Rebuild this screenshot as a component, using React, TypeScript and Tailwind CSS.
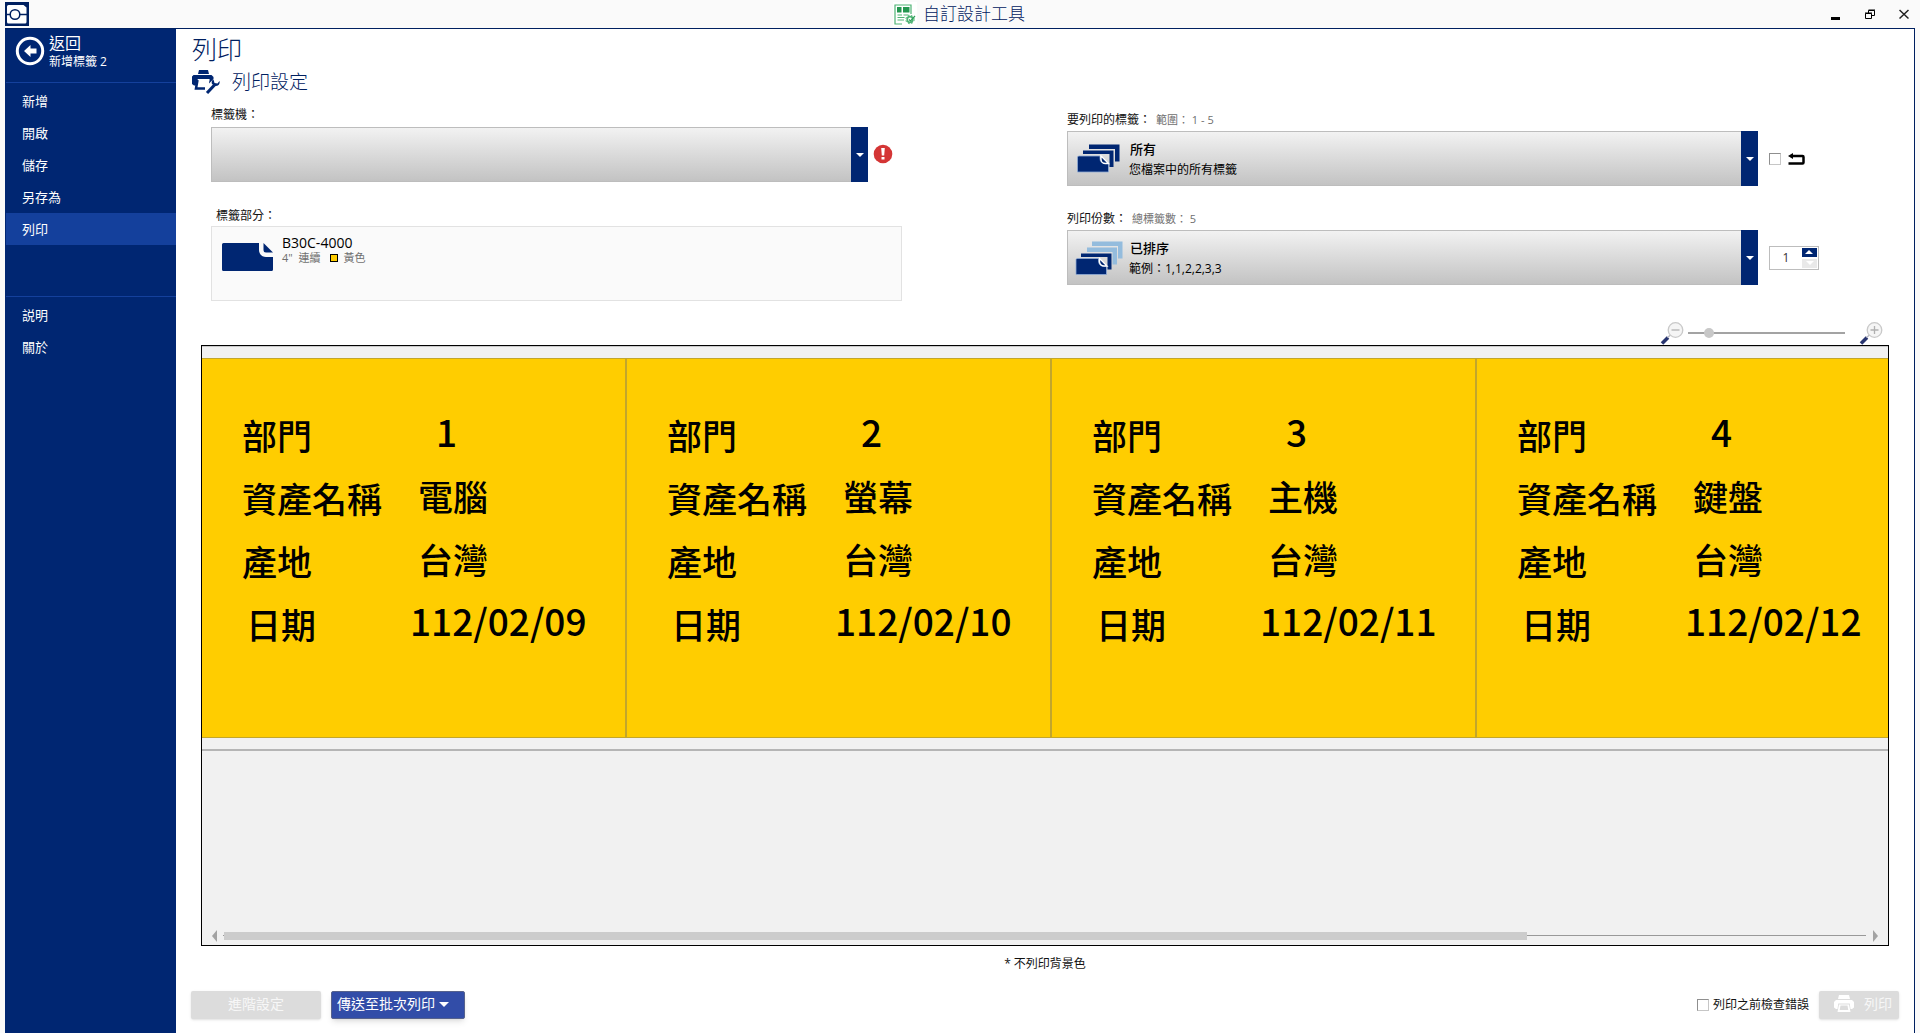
import React, { useState } from 'react';

interface AssetLabel {
    dept: string;
    name: string;
    origin: string;
    date: string;
}

const LABELS: AssetLabel[] = [
    { dept: '1', name: '電腦', origin: '台灣', date: '112/02/09' },
    { dept: '2', name: '螢幕', origin: '台灣', date: '112/02/10' },
    { dept: '3', name: '主機', origin: '台灣', date: '112/02/11' },
    { dept: '4', name: '鍵盤', origin: '台灣', date: '112/02/12' },
];

const FILE_MENU = ['新增', '開啟', '儲存', '另存為', '列印'];
const HELP_MENU = ['説明', '關於'];

const LogoIcon = () => (
    <svg className="h-6 w-6" viewBox="0 0 24 24">
        <rect width="24" height="24" fill="#002060" />
        <path d="M3.500 3h15l3 2.500v14.500a1.500 1.500 0 0 1-1.500 1.500H3.500A1.500 1.500 0 0 1 2 20V4.500A1.500 1.500 0 0 1 3.500 3z" fill="#fff" />
        <path d="M2 12.500h20" stroke="#002060" strokeWidth="1.500" />
        <circle cx="10" cy="12.500" r="4.800" fill="#fff" stroke="#002060" strokeWidth="1.500" />
    </svg>
);

const DesignerIcon = () => (
    <svg className="h-6 w-6" viewBox="0 0 24 24" fill="none">
        <rect width="24" height="24" fill="#fff" />
        <path d="M9 22H2V3h16v9" stroke="#4fb375" strokeWidth="1.200" />
        <rect x="4" y="5" width="4.500" height="5.500" fill="#23964f" />
        <rect x="10" y="5" width="6.500" height="5.500" fill="#23964f" />
        <path d="M4.500 13h4.500M10.500 13h5M4.500 15.500h7M4.500 18h6.500" stroke="#4fb375" strokeWidth="1.200" />
        <circle cx="17" cy="17.500" r="2.800" stroke="#4fb375" strokeWidth="1.700" />
        <circle cx="17" cy="17.500" r="4.200" stroke="#4fb375" strokeWidth="1" strokeDasharray="1.700 1.700" />
        <path d="M16 17.500l1.500 1.500 4.500-5" stroke="#2fa05a" strokeWidth="1.200" />
    </svg>
);

const BackIcon = () => (
    <svg className="h-[30px] w-[30px] shrink-0" viewBox="0 0 30 30">
        <circle cx="15" cy="15" r="12.700" fill="none" stroke="#fff" strokeWidth="3" />
        <path d="M9 15l6.500-6v3.500h6v5h-6V21z" fill="#fff" />
    </svg>
);

const PrinterToolIcon = () => (
    <svg className="h-6 w-7" viewBox="0 0 28 24">
        <path d="M7 0h9l1 4H6z" fill="#002672" />
        <path d="M1.500 5h18l2 2v2l-5 5 1-5H6l-.5 6.500H2L0 14V6.500z" fill="#002672" />
        <path d="M5.500 9.500h12l-.5 4-3 5.500H4z" fill="#fff" />
        <path d="M5.500 10L4 18.500h9" fill="none" stroke="#002672" strokeWidth="2.500" />
        <path d="M15 23l7.500-8" fill="none" stroke="#002672" strokeWidth="3" />
        <path d="M21.500 9.500l1 3.500 3 .5 2-2.500c.8 3-1.500 5.500-4.500 5l-3-2c-.8-2 0-4 1.500-4.500z" fill="#002672" />
    </svg>
);

const PrinterIcon = () => (
    <svg className="h-[18px] w-5" viewBox="0 0 20 18" fill="#fff">
        <path d="M5 0h10l1 4H4z" />
        <path d="M2 5h16l2 2v5.500L18 14h-1.500l-.8-5.500H4.300L3.500 14H2l-2-1.500V7z" />
        <path d="M5 9.500h10l1.500 7.500h-13zM6.500 10.500l-.8 4.500h8.600l-.8-4.500z" fillRule="evenodd" />
    </svg>
);

const MediaIcon = () => (
    <svg className="h-7 w-[51px] shrink-0" viewBox="0 0 51 28" fill="#002672">
        <path d="M1.500 0H37v7c0 4 3 7 7 7h7v12.500a1.500 1.500 0 0 1-1.500 1.500h-48A1.500 1.500 0 0 1 0 26.500v-25A1.500 1.500 0 0 1 1.500 0z" />
        <path d="M41.500 0l9.500 9.500h-7A2.500 2.500 0 0 1 41.500 7z" />
    </svg>
);

interface StackIconProps {
    sorted?: boolean;
}

const StackIcon: React.FC<StackIconProps> = ({ sorted = false }) => {
    if (sorted) {
        return (
            <svg className="h-[34px] w-12" viewBox="0 0 48 34">
                <path d="M17 .5h30.500v17H43V5H17z" fill="#94bcdd" />
                <path d="M12 6.500h30v17H37.500V11H12z" fill="#94bcdd" />
                <path d="M6 12.500h30.500v16H32.500V16H6z" fill="#002672" />
                <path d="M2 17.500h21.500V20c0 3 2 5 5 5H31.500v8.500H1V18.500z" fill="#002672" stroke="#8fabd6" strokeWidth=".8" />
                <path d="M24.500 17.500l7.500 7.500h-3a4.500 4.500 0 0 1-4.500-4.500z" fill="#002672" stroke="#fff" strokeWidth="1.300" />
            </svg>
        );
    }
    return (
        <svg className="h-[34px] w-12" viewBox="0 -2 48 34">
            <path d="M14 .5h30.500v17H40V5H14z" fill="#002672" />
            <path d="M8 6.500h30.500v16.500H34.500V10H8z" fill="#002672" />
            <path d="M3.500 12h21.500v2.500c0 3 2 5 5 5H33.500V28H2.500V13z" fill="#002672" stroke="#8fabd6" strokeWidth=".8" />
            <path d="M26 12l7.500 7.500h-3A4.500 4.500 0 0 1 26 15z" fill="#002672" stroke="#fff" strokeWidth="1.300" />
        </svg>
    );
};

const MagnifierIcon = ({ plus = false }: { plus?: boolean }) => (
    <svg className="h-6 w-6" viewBox="0 0 24 24" fill="none">
        <path d="M2 22.500l6-6" stroke="#28356f" strokeWidth="3.500" />
        <path d="M7.500 16.500l3-2.500" stroke="#b9b9c4" strokeWidth="1.500" />
        <circle cx="15.500" cy="9" r="7.300" fill="#f5f5f5" stroke="#c9c9c9" strokeWidth="1.300" />
        <path d={plus ? 'M11.500 9h8M15.500 5v8' : 'M11.500 9h8'} stroke="#b0b0b0" strokeWidth="1.300" />
    </svg>
);

const Caret = () => (
    <svg className="h-1 w-2" viewBox="0 0 8 4" fill="#fff">
        <path d="M0 0h8L4 4z" />
    </svg>
);

interface GradientSelectProps {
    id: string;
    title: string;
    description?: string;
    icon?: React.ReactNode;
}

const GradientSelect: React.FC<GradientSelectProps> = ({ id, title, description, icon }) => (
    <div className="relative h-[55px] min-w-0 flex-1">
        <select
            id={id}
            className="h-full w-full appearance-none border border-[#bdbdbd] bg-linear-to-b from-[#f2f2f2] to-[#c3c3c3] pb-[18px] pl-[62px] text-[13px] font-medium text-black"
        >
            <option>{title}</option>
        </select>
        {/* icon, second line and arrow lie over the native select */}
        <div className="pointer-events-none absolute inset-0 flex">
            <div className="flex w-[62px] shrink-0 items-center pl-2">{icon}</div>
            <div className="flex-1 pt-[29px] text-xs leading-5 text-black">{description}</div>
            <div className="flex w-[17px] items-center justify-center bg-[#002672]">
                <Caret />
            </div>
        </div>
    </div>
);

const CheckBox = ({ id, label }: { id: string; label?: string }) => (
    <input
        id={id}
        type="checkbox"
        aria-label={label}
        className="h-3 w-3 appearance-none border border-[#c6c6c6] border-t-[#8f8f8f] border-l-[#8f8f8f] bg-white checked:bg-[#002672]"
    />
);

const TitleBar = () => (
    <header className="grid h-7 grid-cols-[1fr_auto_1fr] items-center pr-[11px] pl-[5px]">
        <LogoIcon />
        <div className="flex items-center gap-1.5 pl-1">
            <DesignerIcon />
            <span className="text-[17px] leading-6 font-light text-[#002060]">自訂設計工具</span>
        </div>
        <div className="flex justify-end gap-6">
            <button type="button" aria-label="最小化" className="h-[11px] w-[10px]">
                <svg className="h-[11px] w-[10px]" viewBox="0 0 10 11">
                    <path d="M0 8h9v3H0z" />
                </svg>
            </button>
            <button type="button" aria-label="還原" className="h-[11px] w-[10px]">
                <svg className="h-[11px] w-[10px]" viewBox="0 0 10 11" fill="none" stroke="#000">
                    <path d="M3.500 4V1.500h6v5H7M3.500 1h6.500M.5 4.500h6v5h-6zM0 4h7" />
                </svg>
            </button>
            <button type="button" aria-label="關閉" className="h-[11px] w-[10px]">
                <svg className="h-[11px] w-[10px]" viewBox="0 0 10 11" fill="none" stroke="#222" strokeWidth="1.500">
                    <path d="M.5 1l9 8.500M9.500 1l-9 8.500" />
                </svg>
            </button>
        </div>
    </header>
);

const NavItem = ({ text, active }: { text: string; active?: boolean }) => (
    <li>
        <a href="#" className={`block h-8 pl-4 text-[13px] leading-8 ${active ? 'bg-[#14409c]' : ''}`}>
            {text}
        </a>
    </li>
);

const Sidebar = () => (
    <nav className="w-[171px] shrink-0 bg-[#002672] pl-px text-white">
        <a href="#" className="flex h-[54px] items-start border-b border-[#14409c] pt-[7px] pl-[9px]">
            <BackIcon />
            <span className="flex flex-col pl-1">
                <span className="-mt-1 text-base leading-[22px]">返回</span>
                <span className="text-xs leading-4">新增標籤 2</span>
            </span>
        </a>
        <ul className="pt-0.5">
            {FILE_MENU.map((item) => (
                <NavItem key={item} text={item} active={item === '列印'} />
            ))}
        </ul>
        <ul className="mt-[51px] border-t border-[#14409c] pt-0.5">
            {HELP_MENU.map((item) => (
                <NavItem key={item} text={item} />
            ))}
        </ul>
    </nav>
);

const PrintSettings = () => {
    const [copies, setCopies] = useState(1);

    return (
        <section className="flex">
            <div className="min-w-0 flex-1 pt-2">
                <label htmlFor="printer" className="mb-0.5 block text-xs leading-5">標籤機：</label>
                <div className="flex items-center">
                    <GradientSelect id="printer" title="" />
                    <svg className="mr-[9px] mb-0.5 ml-[5px] h-5 w-5" viewBox="0 0 20 20">
                        <circle cx="10" cy="10" r="9.300" fill="#d43535" />
                        <path d="M8.200 4h3.600l-.6 7.500H8.800zM8.500 13h3v2.500h-3z" fill="#fff" />
                    </svg>
                </div>
                <h3 className="mt-6 pl-[5px] text-xs leading-5">標籤部分：</h3>
                <div className="flex h-[75px] items-start border border-[#e2e2e2] bg-[#fafafa] pt-2 pl-[10px]">
                    <div className="pt-2">
                        <MediaIcon />
                    </div>
                    <div className="pl-[9px]">
                        <p className="text-sm leading-4 text-black">B30C-4000</p>
                        <p className="flex items-center text-[11px] leading-[14px] text-[#6f6f6f]">
                            <span>4"&nbsp; 連續</span>
                            <span className="mr-[5px] ml-[10px] h-2 w-2 border border-black bg-[#ffcd00]" />
                            <span>黃色</span>
                        </p>
                    </div>
                </div>
            </div>

            <div className="ml-[165px] min-w-0 flex-1 pt-[13px]">
                <div className="mb-px flex text-xs leading-5">
                    <label htmlFor="which">要列印的標籤：</label>
                    <span className="pl-[5px] text-[11px] text-[#6f6f6f]">範圍： 1 - 5</span>
                </div>
                <div className="flex">
                    <GradientSelect id="which" title="所有" description="您檔案中的所有標籤" icon={<StackIcon />} />
                </div>
                <div className="mt-[23px] mb-px flex text-xs leading-5">
                    <label htmlFor="copies-mode">列印份數：</label>
                    <span className="pl-[5px] text-[11px] text-[#6f6f6f]">總標籤數： 5</span>
                </div>
                <div className="flex">
                    <GradientSelect id="copies-mode" title="已排序" description="範例：1,1,2,2,3,3" icon={<StackIcon sorted />} />
                </div>
            </div>

            <div className="w-[156px] shrink-0 pt-[34px] pl-[11px]">
                <div className="flex h-[55px] items-center gap-[7px]">
                    <CheckBox id="reverse" label="反向列印" />
                    <svg className="h-3 w-[17px]" viewBox="0 0 17 12" fill="none" stroke="#000" strokeWidth="2.500">
                        <path d="M4 3h10.500q1 0 1 1v5.500q0 1-1 1H.5" />
                        <path d="M5 0v6L0 3z" fill="#000" stroke="none" />
                    </svg>
                </div>
                <div className="mt-11 flex h-[55px] items-center">
                    <div className="flex h-6 w-[50px] items-center border border-[#bdbdbd] bg-white pr-px">
                        <input
                            type="text"
                            aria-label="份數"
                            className="h-5 w-8 min-w-0 text-center text-xs text-[#333]"
                            value={copies}
                            onChange={(e) => setCopies(Number(e.target.value) || 1)}
                        />
                        <div className="flex flex-col gap-0.5">
                            <button
                                type="button"
                                aria-label="增加"
                                className="flex h-[9px] w-[15px] rotate-180 items-center justify-center bg-[#002672]"
                                onClick={() => setCopies(copies + 1)}
                            >
                                <Caret />
                            </button>
                            <button
                                type="button"
                                aria-label="減少"
                                className="flex h-[9px] w-[15px] items-center justify-center bg-[#e9e9e9]"
                                disabled={copies <= 1}
                                onClick={() => setCopies(copies - 1)}
                            >
                                <Caret />
                            </button>
                        </div>
                    </div>
                </div>
            </div>
        </section>
    );
};

const ZoomControl = () => (
    <div className="mt-[19px] mr-[31px] flex h-[25px] items-center justify-end">
        <button type="button" aria-label="縮小">
            <MagnifierIcon />
        </button>
        <input
            type="range"
            aria-label="縮放"
            defaultValue={11}
            className="mr-[14px] ml-[4px] h-3 w-[157px] appearance-none bg-transparent [&::-webkit-slider-runnable-track]:h-0.5 [&::-webkit-slider-runnable-track]:bg-[#a3a3a3] [&::-webkit-slider-thumb]:-mt-1 [&::-webkit-slider-thumb]:h-2.5 [&::-webkit-slider-thumb]:w-2.5 [&::-webkit-slider-thumb]:appearance-none [&::-webkit-slider-thumb]:rounded-full [&::-webkit-slider-thumb]:bg-[#c8c8c8]"
        />
        <button type="button" aria-label="放大">
            <MagnifierIcon plus />
        </button>
    </div>
);

const LabelCard = ({ label }: { label: AssetLabel }) => (
    <dl className="grid w-[425px] shrink-0 auto-rows-[63px] grid-cols-[168px_1fr] border-r-2 border-[#c2a62c] pt-[45px] pl-10 text-[35px] font-medium whitespace-nowrap text-black">
        <dt className="leading-[62px]">部門</dt>
        <dd className="pl-[26px] text-[37px] leading-[54px]">{label.dept}</dd>
        <dt className="leading-[62px]">資產名稱</dt>
        <dd className="pl-2 leading-[58px]">{label.name}</dd>
        <dt className="leading-[62px]">產地</dt>
        <dd className="pl-2 leading-[58px]">{label.origin}</dd>
        <dt className="pl-1 leading-[62px]">日期</dt>
        <dd className="text-[37px] leading-[54px]">{label.date}</dd>
    </dl>
);

const Preview = () => (
    <section className="mr-[25px] ml-[25px] flex flex-1 flex-col border border-black bg-[#f1f1f1]">
        <div className="overflow-hidden border-t border-b-2 border-t-[#c9c9c9] border-b-[#b5b5b5] pt-[11px] pb-[11px]">
            <div className="flex h-[380px] border-y border-[#c2a62c] bg-[#ffcd00] font-['Noto_Sans_CJK_TC',sans-serif]">
                {LABELS.map((label) => (
                    <LabelCard key={label.dept} label={label} />
                ))}
            </div>
        </div>
        <div className="mt-auto mb-[3px] flex h-3 items-center px-[10px]">
            <button type="button" aria-label="向左捲動">
                <svg className="h-3 w-[5px]" viewBox="0 0 5 12" fill="#a3a3a3">
                    <path d="M5 0v12L0 6z" />
                </svg>
            </button>
            <div className="mr-[7px] ml-[6px] flex h-2 flex-1 items-center bg-[linear-gradient(#999,#999)] bg-[length:100%_1px] bg-[position:0_3px] bg-no-repeat pl-px">
                <div className="h-2 bg-[#cccccc]" style={{ width: `${(1304 / 1643) * 100}%` }} />
            </div>
            <button type="button" aria-label="向右捲動">
                <svg className="h-3 w-[5px]" viewBox="0 0 5 12" fill="#a3a3a3">
                    <path d="M0 0v12l5-6z" />
                </svg>
            </button>
        </div>
    </section>
);

const ActionBar = () => (
    <footer className="mt-[17px] flex h-7 items-center pr-[15px] pl-[15px]">
        <button type="button" disabled className="h-7 w-[130px] rounded-xs bg-[#dcdcdc] pb-0.5 text-sm text-[#f7f7f7] shadow-sm">
            進階設定
        </button>
        <button
            type="button"
            className="ml-[10px] flex h-7 w-[134px] items-center gap-1 rounded-xs border border-[#56628c] bg-[#324da8] pb-0.5 pl-[5px] text-sm text-white shadow-md"
        >
            傳送至批次列印
            <svg className="h-[5px] w-[10px]" viewBox="0 0 10 5" fill="#fff">
                <path d="M0 0h10L5 5z" />
            </svg>
        </button>
        <div className="ml-auto flex items-center gap-1">
            <CheckBox id="check-errors" />
            <label htmlFor="check-errors" className="text-xs">列印之前檢查錯誤</label>
        </div>
        <button
            type="button"
            disabled
            className="ml-[10px] flex h-7 w-20 items-center justify-between rounded-xs bg-[#dcdcdc] pr-[7px] pb-0.5 pl-[15px] text-sm text-[#f7f7f7] shadow-sm"
        >
            <PrinterIcon />
            列印
        </button>
    </footer>
);

export default function App() {
    return (
        <div className="flex min-h-screen flex-col bg-[#fafafa] font-['Open_Sans','Noto_Sans_CJK_TC',sans-serif] text-[#111]">
            <TitleBar />
            <div className="mr-[5px] ml-[5px] flex flex-1 border-t border-r border-[#002060] bg-white">
                <Sidebar />
                <main className="flex min-w-0 flex-1 flex-col pb-[14px]">
                    <div className="pt-1 pl-4 text-[#002060]">
                        <h1 className="text-[25px] leading-8 font-light">列印</h1>
                        <div className="mt-[3px] flex h-7 items-center gap-3">
                            <PrinterToolIcon />
                            <h2 className="text-[19px] leading-7 font-light">列印設定</h2>
                        </div>
                    </div>
                    <div className="pt-px pl-[35px]">
                        <PrintSettings />
                    </div>
                    <ZoomControl />
                    <Preview />
                    <p className="mt-2 text-center text-xs leading-5">* 不列印背景色</p>
                    <ActionBar />
                </main>
            </div>
        </div>
    );
}
